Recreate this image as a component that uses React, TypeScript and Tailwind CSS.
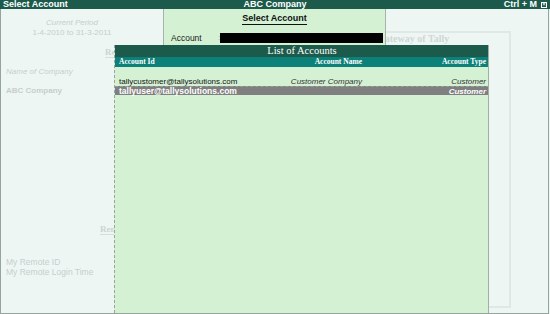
import React from "react";

const sans = { fontFamily: '"Liberation Sans", Arial, sans-serif' };
const serif = { fontFamily: '"Liberation Serif", "Times New Roman", serif' };

export default function App() {
  return (
    <div
      className="relative w-[550px] h-[314px] overflow-hidden bg-[#eef6f4] text-[8px] leading-[8px]"
      style={sans}
    >
      {/* Title bar */}
      <div className="flex items-center h-[9px] bg-[#1c5a4b] text-white font-bold text-[9px] leading-[9px] px-[3px]">
        <span className="flex-1">Select Account</span>
        <span className="flex-1 text-center">ABC Company</span>
        <span className="flex-1 flex justify-end items-center gap-[4px]">
          <span>Ctrl + M</span>
          <span className="w-[6px] h-[6px] border border-white flex items-center justify-center text-[5px] leading-[5px]">
            ×
          </span>
        </span>
      </div>

      {/* Body */}
      <div className="relative h-[305px] w-[549px] border-l border-r border-b border-[#97a39f] flex">
        {/* Left info column */}
        <div className="w-[163px] flex flex-col text-[#c6cecc]">
          <div className="mt-[10px] w-[142px] text-center italic">Current Period</div>
          <div className="mt-[2px] w-[142px] text-center">1-4-2010 to 31-3-2011</div>
          <div
            className="mt-[11px] ml-[104px] font-bold text-[9px] leading-[9px] text-[#cdd4d2] border-b border-[#d6dddb] w-fit whitespace-nowrap"
            style={serif}
          >
            Remote Details
          </div>
          <div className="mt-[10px] ml-[5px] italic">Name of Company</div>
          <div className="mt-[11px] ml-[5px] font-bold">ABC Company</div>
          <div
            className="mt-[130px] ml-[99px] font-bold text-[9px] leading-[9px] text-[#cdd4d2] border-b border-[#d6dddb] w-fit whitespace-nowrap"
            style={serif}
          >
            Remote Details
          </div>
          <div className="mt-[22px] ml-[5px] text-[8.5px] leading-[10px]">My Remote ID</div>
          <div className="ml-[5px] text-[8.5px] leading-[10px] whitespace-nowrap">My Remote Login Time</div>
        </div>

        {/* Gateway of Tally box */}
        <div className="absolute left-[311px] top-[22px] w-[199px] h-[277px] border-2 border-[#e0e8e6] flex justify-start">
          <div
            className="mt-[1px] ml-[63px] font-bold text-[10px] leading-[10px] text-[#cfd6d4] whitespace-nowrap"
            style={serif}
          >
            Gateway of Tally
          </div>
        </div>
      </div>

      {/* Select Account panel */}
      <div className="absolute left-[163px] top-[9px] w-[223px] h-[36px] bg-[#d4f1d4] border-l border-r border-[#a7b4ae] flex flex-col">
        <div className="mt-[5px] self-center font-bold text-[9px] leading-[9px] text-[#111] border-b border-[#111] pb-[1px]">
          Select Account
        </div>
        <div className="mt-[8px] flex items-center">
          <span className="ml-[7px] w-[47px] text-[8.5px] text-[#222]">Account</span>
          <span className="text-[#9aa] w-[2px]">:</span>
          <span className="w-[163px] h-[10px] bg-black"></span>
        </div>
      </div>

      {/* List of Accounts window */}
      <div className="absolute left-[114px] top-[45px] w-[375px] h-[268px] bg-[#d4f1d4] border-l border-dashed border-[#9aa5a0] flex flex-col">
        <div className="absolute right-0 top-0 bottom-0 w-px bg-[#a3aea9]"></div>
        <div
          className="h-[12px] bg-[#1c5a4b] text-white text-center text-[10.5px] leading-[12px]"
          style={serif}
        >
          List of Accounts
        </div>
        <div
          className="h-[10px] bg-[#0b8179] text-white font-bold text-[7.5px] leading-[10px] flex pl-[4px] pr-[3px]"
          style={serif}
        >
          <span className="w-[150px]">Account Id</span>
          <span className="w-[93px] text-right">Account Name</span>
          <span className="flex-1 text-right">Account Type</span>
        </div>
        <div className="h-[10px]"></div>
        <div className="h-[9px] flex items-center pl-[4px] pr-[3px] text-[#111] leading-[9px]">
          <span className="w-[150px] whitespace-nowrap">tallycustomer@tallysolutions.com</span>
          <span className="w-[93px] text-right italic text-[#333]">Customer Company</span>
          <span className="flex-1 text-right italic text-[#333]">Customer</span>
        </div>
        <div className="h-[9px] flex items-center pl-[4px] pr-[3px] bg-[#7f7f7f] text-white font-bold text-[8.5px] leading-[9px] border-t border-dashed border-[#9a9a9a]">
          <span className="w-[150px] whitespace-nowrap">tallyuser@tallysolutions.com</span>
          <span className="w-[93px]"></span>
          <span className="flex-1 text-right italic text-[8px]">Customer</span>
        </div>
      </div>
    </div>
  );
}
